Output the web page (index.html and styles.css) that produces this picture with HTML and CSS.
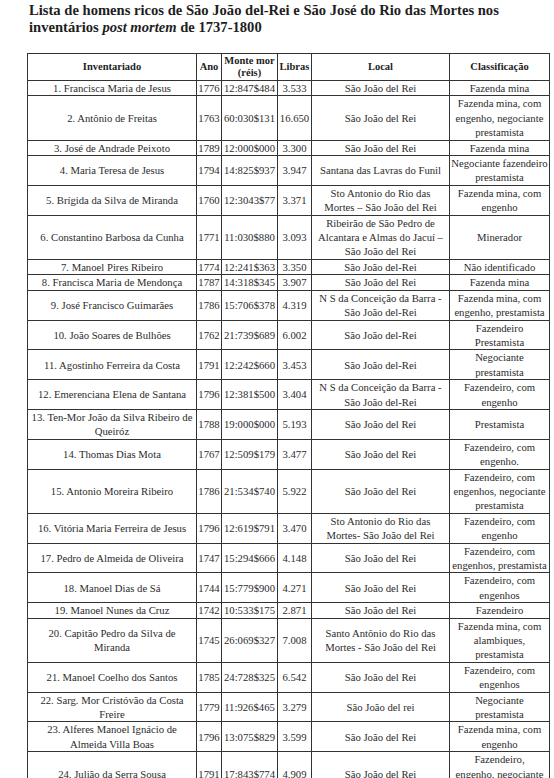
FILE: index.html
```html
<!DOCTYPE html>
<html lang="pt">
<head>
<meta charset="utf-8">
<title>Lista de homens ricos</title>
<link rel="stylesheet" href="styles.css">
</head>
<body>
<h1 class="title"><span class="tline">Lista de homens ricos de São João del-Rei e São José do Rio das Mortes nos</span><span class="tline">inventários <em>post mortem</em> de 1737-1800</span></h1>
<table class="tbl">
<colgroup>
<col class="c-inv"><col class="c-ano"><col class="c-monte"><col class="c-lib"><col class="c-local"><col class="c-class">
</colgroup>
<thead>
<tr><th>Inventariado</th><th>Ano</th><th>Monte mor<br>(réis)</th><th>Libras</th><th>Local</th><th>Classificação</th></tr>
</thead>
<tbody>
<tr><td>1. Francisca Maria de Jesus</td><td>1776</td><td>12:847$484</td><td>3.533</td><td>São João del Rei</td><td>Fazenda mina</td></tr>
<tr><td>2. Antônio de Freitas</td><td>1763</td><td>60:030$131</td><td>16.650</td><td>São João del Rei</td><td>Fazenda mina, com<br>engenho, negociante<br>prestamista</td></tr>
<tr><td>3. José de Andrade Peixoto</td><td>1789</td><td>12:000$000</td><td>3.300</td><td>São João del Rei</td><td>Fazenda mina</td></tr>
<tr><td>4. Maria Teresa de Jesus</td><td>1794</td><td>14:825$937</td><td>3.947</td><td>Santana das Lavras do Funil</td><td>Negociante fazendeiro<br>prestamista</td></tr>
<tr><td>5. Brígida da Silva de Miranda</td><td>1760</td><td>12:3043$77</td><td>3.371</td><td>Sto Antonio do Rio das<br>Mortes – São João del Rei</td><td>Fazenda mina, com<br>engenho</td></tr>
<tr><td>6. Constantino Barbosa da Cunha</td><td>1771</td><td>11:030$880</td><td>3.093</td><td>Ribeirão de São Pedro de<br>Alcantara e Almas do Jacuí –<br>São João del Rei</td><td>Minerador</td></tr>
<tr><td>7. Manoel Pires Ribeiro</td><td>1774</td><td>12:241$363</td><td>3.350</td><td>São João del-Rei</td><td>Não identificado</td></tr>
<tr><td>8. Francisca Maria de Mendonça</td><td>1787</td><td>14:318$345</td><td>3.907</td><td>São João del Rei</td><td>Fazenda mina</td></tr>
<tr><td>9. José Francisco Guimarães</td><td>1786</td><td>15:706$378</td><td>4.319</td><td>N S da Conceição da Barra -<br>São João del-Rei</td><td>Fazenda mina, com<br>engenho, prestamista</td></tr>
<tr><td>10. João Soares de Bulhões</td><td>1762</td><td>21:739$689</td><td>6.002</td><td>São João del-Rei</td><td>Fazendeiro<br>Prestamista</td></tr>
<tr><td>11. Agostinho Ferreira da Costa</td><td>1791</td><td>12:242$660</td><td>3.453</td><td>São João del-Rei</td><td>Negociante<br>prestamista</td></tr>
<tr><td>12. Emerenciana Elena de Santana</td><td>1796</td><td>12:381$500</td><td>3.404</td><td>N S da Conceição da Barra -<br>São João del-Rei</td><td>Fazendeiro, com<br>engenho</td></tr>
<tr><td>13. Ten-Mor João da Silva Ribeiro de<br>Queiróz</td><td>1788</td><td>19:000$000</td><td>5.193</td><td>São João del Rei</td><td>Prestamista</td></tr>
<tr><td>14. Thomas Dias Mota</td><td>1767</td><td>12:509$179</td><td>3.477</td><td>São João del Rei</td><td>Fazendeiro, com<br>engenho.</td></tr>
<tr><td>15. Antonio Moreira Ribeiro</td><td>1786</td><td>21:534$740</td><td>5.922</td><td>São João del Rei</td><td>Fazendeiro, com<br>engenhos, negociante<br>prestamista</td></tr>
<tr><td>16. Vitória Maria Ferreira de Jesus</td><td>1796</td><td>12:619$791</td><td>3.470</td><td>Sto Antonio do Rio das<br>Mortes- São João del Rei</td><td>Fazendeiro, com<br>engenho</td></tr>
<tr><td>17. Pedro de Almeida de Oliveira</td><td>1747</td><td>15:294$666</td><td>4.148</td><td>São João del Rei</td><td>Fazendeiro, com<br>engenhos, prestamista</td></tr>
<tr><td>18. Manoel Dias de Sá</td><td>1744</td><td>15:779$900</td><td>4.271</td><td>São João del Rei</td><td>Fazendeiro, com<br>engenhos</td></tr>
<tr><td>19. Manoel Nunes da Cruz</td><td>1742</td><td>10:533$175</td><td>2.871</td><td>São João del Rei</td><td>Fazendeiro</td></tr>
<tr><td>20. Capitão Pedro da Silva de<br>Miranda</td><td>1745</td><td>26:069$327</td><td>7.008</td><td>Santo Antônio do Rio das<br>Mortes - São João del Rei</td><td>Fazenda mina, com<br>alambiques,<br>prestamista</td></tr>
<tr><td>21. Manoel Coelho dos Santos</td><td>1785</td><td>24:728$325</td><td>6.542</td><td>São João del Rei</td><td>Fazendeiro, com<br>engenhos</td></tr>
<tr><td>22. Sarg. Mor Cristóvão da Costa<br>Freire</td><td>1779</td><td>11:926$465</td><td>3.279</td><td>São João del rei</td><td>Negociante<br>prestamista</td></tr>
<tr><td>23. Alferes Manoel Ignácio de<br>Almeida Villa Boas</td><td>1796</td><td>13:075$829</td><td>3.599</td><td>São João del Rei</td><td>Fazenda mina, com<br>engenho</td></tr>
<tr><td>24. Julião da Serra Sousa</td><td>1791</td><td>17:843$774</td><td>4.909</td><td>São João del Rei</td><td>Fazendeiro,<br>engenho, negociante<br>prestamista</td></tr>
</tbody>
</table>
</body>
</html>
```
FILE: styles.css
```css
html, body {
  margin: 0;
  padding: 0;
  background: #fff;
}
body {
  padding: 2px 0 0 27px;
  font-family: "Liberation Serif", "Times New Roman", serif;
  color: #222;
}
.title {
  margin: 0 0 17px 2px;
  font-family: "Liberation Serif", "Times New Roman", serif;
  font-size: 14.6px;
  line-height: 17px;
  font-weight: bold;
  width: 515px;
  color: #1e1e1e;
}
.tline {
  display: block;
  white-space: nowrap;
}
.title em {
  font-style: italic;
}
.tbl {
  width: 522px;
  table-layout: fixed;
  border-collapse: collapse;
  border: 1px solid #222;
  font-family: "Liberation Serif", "Times New Roman", serif;
  font-size: 10.7px;
  line-height: 14.4px;
  color: #2c2c2c;
}
.c-inv { width: 169px; }
.c-ano { width: 25px; }
.c-monte { width: 56px; }
.c-lib { width: 34px; }
.c-local { width: 138px; }
.c-class { width: 100px; }
.tbl th, .tbl td {
  font-family: "Liberation Serif", "Times New Roman", serif;
  border: 1px solid #333;
  padding: 0 1px;
  text-align: center;
  vertical-align: middle;
  white-space: nowrap;
  overflow: hidden;
}
.tbl th {
  font-weight: bold;
  font-size: 10.5px;
  line-height: 12px;
  height: 26px;
  color: #1e1e1e;
}
```
